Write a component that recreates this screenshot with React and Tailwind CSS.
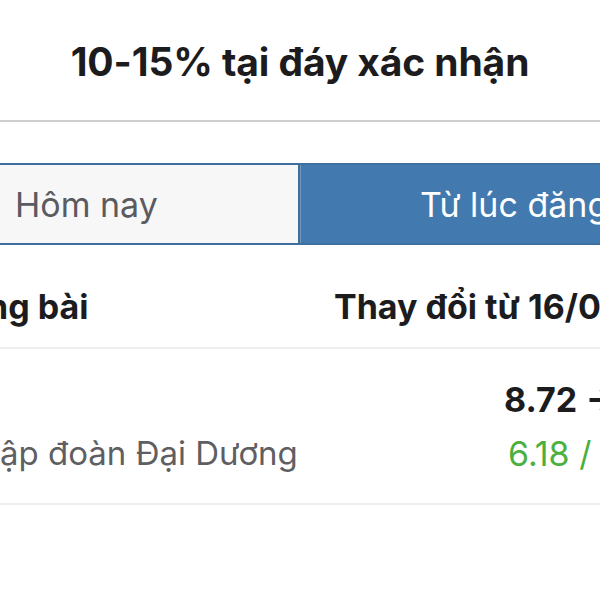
import React from 'react';

const font = { fontFamily: 'Inter, "Noto Sans", sans-serif' };

export default function App() {
  return (
    <div className="w-[600px] h-[600px] bg-white overflow-hidden text-[#1c1c1e]" style={font}>
      {/* Title */}
      <div className="h-[120px] flex items-center justify-center pt-1">
        <h1 className="text-[39px] font-bold tracking-[-0.1px] whitespace-nowrap">10-15% tại đáy xác nhận</h1>
      </div>
      <div className="h-[2px] bg-[#cfcfcf]"></div>

      {/* Tabs */}
      <div className="mt-[41px] flex h-[82px] border-y-2 border-[#3d6f9f]">
        <div className="w-[300px] shrink-0 bg-[#f7f7f8] flex items-center pl-[15px] border-r-2 border-[#3d6f9f]">
          <span className="text-[34px] text-[#5a5a5f] whitespace-nowrap">Hôm nay</span>
        </div>
        <div className="flex-1 bg-[#4279ae] flex items-center pl-[119px] overflow-hidden border-l border-[#6f97c0]">
          <span className="text-[34px] text-white whitespace-nowrap">Từ lúc đăng bài</span>
        </div>
      </div>

      {/* Header row */}
      <div className="flex h-[104px] items-center pt-[20px] border-b-2 border-[#eeeeee] overflow-hidden">
        <div className="w-[334px] shrink-0 overflow-hidden">
          <div className="-ml-[13px] text-[34px] font-bold whitespace-nowrap">ng bài</div>
        </div>
        <div className="text-[34px] font-bold whitespace-nowrap">Thay đổi từ 16/09</div>
      </div>

      {/* Data row */}
      <div className="flex h-[156px] border-b-2 border-[#eeeeee] overflow-hidden">
        <div className="w-[504px] shrink-0 flex flex-col pt-[80px]">
          <span className="text-[33px] text-[#5f5f63] whitespace-nowrap">ập đoàn Đại Dương</span>
        </div>
        <div className="flex flex-col pt-[25px] gap-[3px] whitespace-nowrap">
          <span className="text-[34px] font-bold">8.72 → 9.1</span>
          <span className="text-[34px] text-[#4cb040] pl-[4px]">6.18 / 5%</span>
        </div>
      </div>
    </div>
  );
}
